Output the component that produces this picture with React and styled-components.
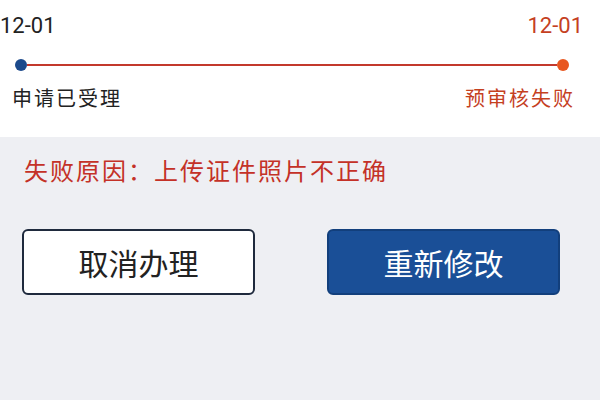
import React from "react";
import styled, { createGlobalStyle } from "styled-components";

const Global = createGlobalStyle`
  html, body {
    margin: 0;
    padding: 0;
    background: #eeeff3;
    font-family: "Noto Sans CJK SC", "Noto Sans", sans-serif;
  }
`;

const Page = styled.div`
  width: 600px;
  height: 400px;
  overflow: hidden;
  background: #eeeff3;
`;

const Progress = styled.div`
  background: #ffffff;
  height: 137px;
  box-sizing: border-box;
  padding: 12px 17px 0 0;
`;

const Row = styled.div`
  display: flex;
  justify-content: space-between;
  align-items: center;
`;

const DateText = styled.div`
  font-family: Roboto, "Noto Sans", sans-serif;
  font-size: 22px;
  line-height: 28px;
  color: ${({ $tone }) => ($tone === "fail" ? "#c5401f" : "#222")};
`;

const Track = styled.div`
  display: flex;
  align-items: center;
  height: 14px;
  margin: 18px 14px 0 15px;
`;

const Dot = styled.span`
  flex: none;
  width: 12px;
  height: 12px;
  border-radius: 50%;
  background: ${({ $color }) => $color};
`;

const Line = styled.span`
  flex: 1;
  height: 2px;
  background: #c3392c;
`;

const Steps = styled(Row)`
  margin-top: 13px;
  padding-left: 12px;
  padding-right: 8px;
`;

const StepText = styled.div`
  font-size: 20px;
  line-height: 26px;
  letter-spacing: 2px;
  color: ${({ $tone }) => ($tone === "fail" ? "#c5401f" : "#222")};
`;

const Reason = styled.div`
  padding: 17px 0 0 24px;
  font-size: 24px;
  line-height: 32px;
  letter-spacing: 2px;
  color: #c43127;
`;

const Actions = styled.div`
  display: flex;
  justify-content: space-between;
  padding: 43px 40px 0 22px;
`;

const Button = styled.button`
  width: 233px;
  height: 66px;
  box-sizing: border-box;
  border-radius: 6px;
  font-family: "Noto Sans CJK SC", sans-serif;
  font-size: 30px;
  font-weight: 400;
  cursor: pointer;
  border: 2px solid ${({ $primary }) => ($primary ? "#123f7c" : "#1f2a3d")};
  background: ${({ $primary }) => ($primary ? "#1a4f97" : "#ffffff")};
  color: ${({ $primary }) => ($primary ? "#ffffff" : "#222")};
`;

export default function App() {
  return (
    <Page>
      <Global />
      <Progress>
        <Row>
          <DateText>12-01</DateText>
          <DateText $tone="fail">12-01</DateText>
        </Row>
        <Track>
          <Dot $color="#1c4a8c" />
          <Line />
          <Dot $color="#e8561f" />
        </Track>
        <Steps>
          <StepText>申请已受理</StepText>
          <StepText $tone="fail">预审核失败</StepText>
        </Steps>
      </Progress>
      <Reason>失败原因：上传证件照片不正确</Reason>
      <Actions>
        <Button>取消办理</Button>
        <Button $primary>重新修改</Button>
      </Actions>
    </Page>
  );
}
